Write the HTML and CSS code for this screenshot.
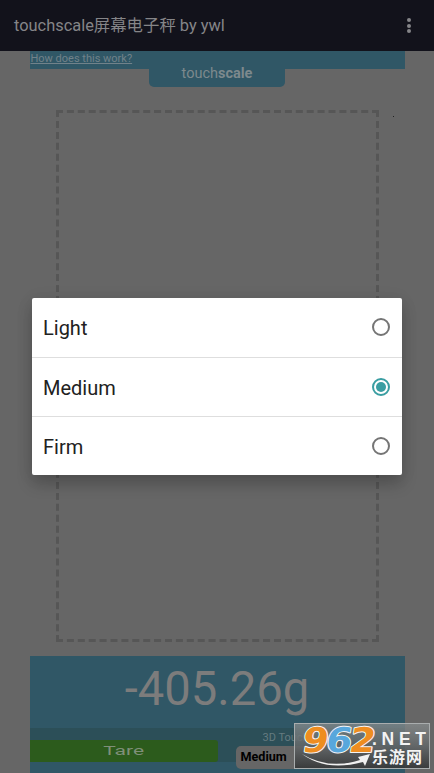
FILE: index.html
```html
<!DOCTYPE html>
<html lang="zh">
<head>
<meta charset="utf-8">
<meta name="viewport" content="width=device-width">
<title>touchscale</title>
<link rel="stylesheet" href="styles.css">
</head>
<body>
<div class="app">
  <header class="appbar">
    <h1>touchscale屏幕电子秤 by ywl</h1>
    <div class="menu"><i></i><i></i><i></i></div>
  </header>
  <main class="content">
    <div class="strip"><a>How does this work?</a></div>
    <div class="brand">touch<b>scale</b></div>
    <svg class="pad" width="323" height="532" viewBox="0 0 323 532">
      <g fill="none" stroke="#565656" stroke-width="3">
        <path d="M0 1.5H323M0 530.5H323" stroke-dasharray="7 3.9"/>
        <path d="M1.5 0V532M321.5 0V532" stroke-dasharray="7 3.94"/>
      </g>
    </svg>
    <section class="panel">
      <div class="weight">-405.26g</div>
      <div class="controls">
        <div class="tare"><span>Tare</span></div>
        <div class="force">
          <span class="label">3D Touch</span>
          <div class="select">Medium</div>
        </div>
      </div>
    </section>
  </main>
</div>
<i class="speck"></i>
<div class="dialog">
  <div class="option"><span>Light</span><i class="radio"></i></div>
  <div class="option"><span>Medium</span><i class="radio on"></i></div>
  <div class="option"><span>Firm</span><i class="radio"></i></div>
</div>
<svg class="logo" width="136" height="46" viewBox="0 0 136 46">
  <defs>
    <linearGradient id="plate" x1="0" y1="0" x2="0" y2="1">
      <stop offset="0" stop-color="#878c8d" stop-opacity=".75"/>
      <stop offset=".5" stop-color="#626668" stop-opacity=".88"/>
      <stop offset="1" stop-color="#343637" stop-opacity=".9"/>
    </linearGradient>
  </defs>
  <rect x=".5" y=".5" width="135" height="45" fill="url(#plate)" stroke="#a9adae"/>
  <g class="digits" stroke="#f4f4f4" stroke-width="2" stroke-linejoin="round" paint-order="stroke">
    <text transform="translate(7 28.5) skewX(-9)" textLength="26" lengthAdjust="spacingAndGlyphs" fill="#ee8d20">9</text>
    <text transform="translate(30.5 28.5) skewX(-9)" textLength="26" lengthAdjust="spacingAndGlyphs" fill="#58a7dc">6</text>
    <text transform="translate(54 28.5) skewX(-9)" textLength="26" lengthAdjust="spacingAndGlyphs" fill="#ee8d20">2</text>
  </g>
  <path d="M8 31Q34 47 66 37L64 34L76 31L71 43L69 39Q32 49 8 31Z" fill="#f1f1f1"/>
  <text class="net" x="78" y="21.5" textLength="54">.NET</text>
  <text class="cn" x="78" y="40" textLength="50">乐游网</text>
</svg>
</body>
</html>
```
FILE: styles.css
```css
* { box-sizing: border-box; }
body {
  margin: 0;
  width: 434px;
  height: 773px;
  overflow: hidden;
  position: relative;
  background: #666;
  font-family: Roboto, "Noto Sans CJK SC", sans-serif;
}
.app { height: 773px; display: flex; flex-direction: column; }
.appbar {
  height: 51px;
  flex: none;
  background: #12121b;
  display: flex;
  align-items: center;
  justify-content: space-between;
  padding: 0 23px 0 14px;
}
h1 { margin: 0; font-size: 16.4px; line-height: 24px; font-weight: 400; color: #858588; white-space: nowrap; }
.menu { display: flex; flex-direction: column; gap: 1.7px; }
.menu i { width: 4px; height: 4px; border-radius: 50%; background: #858588; }
.content { flex: 1; display: flex; flex-direction: column; align-items: center; }
.strip { width: 375px; height: 18px; flex: none; background: #305766; padding-left: 1px; font-size: 11px; line-height: 15px; color: #71828a; }
.strip a { text-decoration: underline; }
.brand {
  width: 136px;
  height: 18px;
  flex: none;
  background: #305766;
  border-radius: 0 0 5px 5px;
  color: #7d898d;
  font-size: 14.5px;
  line-height: 10px;
  text-align: center;
}
.pad { display: block; flex: none; margin-top: 23px; }
.panel { width: 375px; height: 117px; flex: none; margin-top: 14px; background: #305766; overflow: hidden; }
.weight { height: 72px; font-size: 47.2px; line-height: 67px; text-align: center; color: #7c7c7c; }
.controls { height: 45px; display: flex; background: #2c4f58; border-bottom: 11px solid #305766; }
.tare {
  width: 188px;
  height: 22px;
  margin-top: 12px;
  background: #2c5b1c;
  border-radius: 0 3px 3px 0;
  color: #7f8f79;
  text-align: center;
  font-size: 12px;
  line-height: 22px;
}
.tare span { display: inline-block; transform: scaleX(1.75); }
.force { flex: 1; padding-left: 18px; }
.label { display: block; padding-left: 27px; font-size: 11px; line-height: 20px; height: 18px; color: #657b80; white-space: nowrap; }
.select { width: 150px; height: 23px; background: #666; border-radius: 5px; padding-left: 5px; color: #000; font-size: 12.6px; line-height: 22px; font-weight: 700; }
.speck { position: absolute; left: 393px; top: 116px; width: 1px; height: 1px; background: #222; }
.dialog {
  position: absolute;
  left: 32px;
  top: 298px;
  width: 370px;
  height: 177px;
  background: #fff;
  border-radius: 2px;
  box-shadow: 0 9px 16px rgba(0,0,0,.2), 0 2px 18px rgba(0,0,0,.07);
}
.option { height: 59px; display: flex; align-items: center; justify-content: space-between; padding: 1px 12.5px 0 11px; font-size: 20px; color: #212121; }
.option + .option { border-top: 1px solid #dedede; }
.radio { width: 18px; height: 18px; border: 2px solid #757575; border-radius: 50%; display: flex; align-items: center; justify-content: center; position: relative; top: -1px; }
.radio.on { border-color: #3a9ea2; }
.radio.on::after { content: ""; width: 10px; height: 10px; flex: none; border-radius: 50%; background: #3a9ea2; }
.logo { position: absolute; left: 294px; top: 723px; overflow: visible; }
.digits { font: 700 34px "DejaVu Sans", sans-serif; }
.net { font: 700 17.5px "Liberation Sans", sans-serif; fill: #f3f3f3; }
.cn { font: 700 16px "Noto Sans CJK SC", sans-serif; fill: #f3f3f3; }
```
